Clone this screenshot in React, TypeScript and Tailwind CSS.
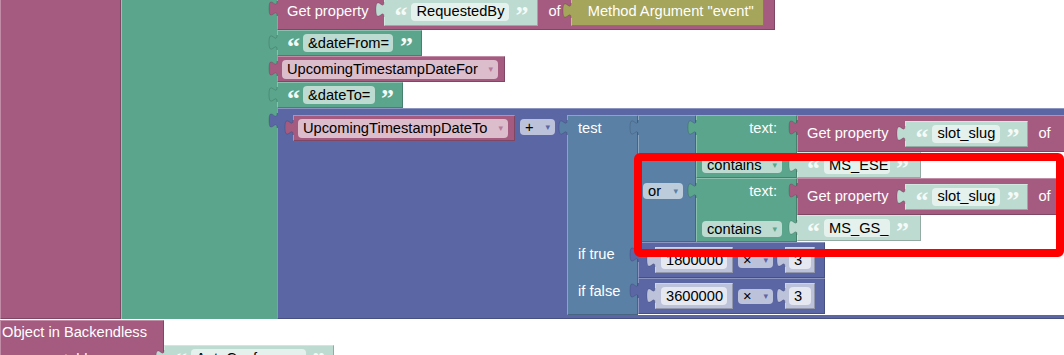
import type { ReactNode } from "react";

type Tone = "mag" | "grn" | "math" | "logic" | "olive" | "shText" | "shMath";

const TONE: Record<Tone, { bg: string; hex: string }> = {
  mag: { bg: "bg-[#a55b80]", hex: "#a55b80" },
  grn: { bg: "bg-[#5ba58c]", hex: "#5ba58c" },
  math: { bg: "bg-[#5b67a5]", hex: "#5b67a5" },
  logic: { bg: "bg-[#5b80a5]", hex: "#5b80a5" },
  olive: { bg: "bg-[#a5a55b]", hex: "#a5a55b" },
  shText: { bg: "bg-[#bddbd1]", hex: "#bddbd1" },
  shMath: { bg: "bg-[#bdc2db]", hex: "#bdc2db" },
};

const BEVEL = "shadow-[inset_1px_1px_0_rgba(255,255,255,0.3),inset_-1px_-1px_0_rgba(0,0,0,0.22)]";

// puzzle tab sticking out of the left edge of a value block
function Tab({ hex, low }: { hex: string; low?: boolean }) {
  return (
    <svg className={`absolute left-[-8px] overflow-visible ${low ? "top-[8px]" : "top-[5px]"}`} width={9} height={15}>
      <path d="M9,0 L8,0 C8,10 0,-8 0,7.5 S8,5 8,15 L9,15 Z" fill={hex} />
      <path d="M8,0 C8,10 0,-8 0,7.5 S8,5 8,15" fill="none" stroke="rgba(0,0,0,0.18)" strokeWidth={0.8} />
    </svg>
  );
}

function Blk({
  tone,
  className = "",
  tab = true,
  low,
  children,
}: {
  tone: Tone;
  className?: string;
  tab?: boolean;
  low?: boolean;
  children?: ReactNode;
}) {
  const t = TONE[tone];
  return (
    <div className={`relative shrink-0 ${t.bg} ${BEVEL} ${className}`}>
      {tab ? <Tab hex={t.hex} low={low} /> : null}
      {children}
    </div>
  );
}

function Field({ text, className, arrow }: { text: string; className: string; arrow?: string }) {
  return (
    <div className={`flex shrink-0 items-center justify-between rounded-[4px] px-[5px] whitespace-nowrap text-black ${className}`}>
      <span>{text}</span>
      {arrow ? <span className={`font-['DejaVu_Sans',sans-serif] text-[9px] ${arrow}`}>▾</span> : null}
    </div>
  );
}

function Quote({ close, className = "" }: { close?: boolean; className?: string }) {
  return (
    <span className={`relative top-[4px] shrink-0 font-['Liberation_Serif',serif] text-[26px] font-bold text-[#f4faf7] ${className}`}>
      {close ? "\u201D" : "\u201C"}
    </span>
  );
}

// text shadow block: quotes around an editable field
function Str({ text, className, field }: { text: string; className: string; field: string }) {
  return (
    <Blk tone="shText" className={`flex items-center pl-[10px] ${className}`}>
      <Quote className="w-[17px]" />
      <Field text={text} className={`h-[18px] bg-[#e5f1ed] ${field}`} />
      <Quote close className="ml-[6px]" />
    </Blk>
  );
}

function GetProp() {
  return (
    <Blk tone="mag" className="flex h-[37px] w-[300px] items-center pl-[10px]">
      <span className="shrink-0 text-white">Get property</span>
      <Str text="slot_slug" className="ml-[17px] h-[26px] w-[123px]" field="w-[68px]" />
      <span className="ml-[10px] shrink-0 text-white">of</span>
    </Blk>
  );
}

function TextContains({ h, str }: { h: string; str: string }) {
  return (
    <div className="flex shrink-0">
      <Blk tone="grn" className={`flex w-[101px] flex-col pl-[6px] pt-[3px] pb-[5px] ${h}`}>
        <div className="flex h-5 w-[75px] shrink-0 items-center justify-end text-white">text:</div>
        <Field text="contains" className="mt-auto h-[16px] w-[80px] bg-[#bddbd1]" arrow="text-[#5ba58c]" />
      </Blk>
      <div className="flex shrink-0 flex-col items-start">
        <GetProp />
        <Str text={str} className="h-[26px] w-[124px]" field="w-[66px]" />
      </div>
    </div>
  );
}

function Multiply({ num }: { num: string }) {
  return (
    <Blk tone="math" className="flex h-[36px] w-[187px] items-center pl-[17px]">
      <Blk tone="shMath" className="flex h-[26px] w-[78px] items-center pl-[6px]">
        <Field text={num} className="h-[18px] w-[66px] bg-[#e5e7f1]" />
      </Blk>
      <Field text="×" className="ml-[5px] h-[15px] w-[35px] bg-[#bdc2db]" arrow="text-[#5b67a5]" />
      <Blk tone="shMath" className="ml-[12px] flex h-[26px] w-[30px] items-center pl-[4px]">
        <Field text="3" className="h-[18px] w-[22px] bg-[#e5e7f1]" />
      </Blk>
    </Blk>
  );
}

export default function App() {
  return (
    <div className="relative h-[355px] w-[1064px] overflow-hidden bg-white font-['Liberation_Sans',Arial,sans-serif] text-[14.67px] leading-none">
      <div className="mt-[-7px] flex flex-col">
        <div className="flex shrink-0">
          <div className={`w-[121px] shrink-0 bg-[#a55b80] ${BEVEL}`} />
          <div className="w-[156px] shrink-0 border-l border-[#8ec5b2] bg-[#5ba58c]" />

          <div className="flex shrink-0 flex-col items-start">
            {/* Get property "RequestedBy" of Method Argument "event" */}
            <Blk tone="mag" low className="flex h-[37px] w-[498px] items-center pl-[10px]">
              <span className="shrink-0 text-white">Get property</span>
              <Str text="RequestedBy" className="ml-[16px] h-[29px] w-[154px]" field="w-[98px]" />
              <span className="ml-[10px] shrink-0 text-white">of</span>
              <Blk tone="olive" className="ml-[10px] flex h-[28px] w-[193px] items-center pl-[17px]">
                <span className="whitespace-nowrap text-white">Method Argument "event"</span>
              </Blk>
            </Blk>

            <Blk tone="grn" className="flex h-[26px] w-[145px] items-center pl-[10px]">
              <Quote className="w-[16px]" />
              <Field text="&dateFrom=" className="h-[18px] w-[90px] bg-[#bddbd1]" />
              <Quote close className="ml-[7px]" />
            </Blk>

            <Blk tone="mag" className="flex h-[26px] w-[228px] items-center pl-[5px]">
              <Field text="UpcomingTimestampDateFor" className="h-[19px] w-[216px] bg-[#dbbdcc]" arrow="text-[#b77a98]" />
            </Blk>

            <Blk tone="grn" className="flex h-[26px] w-[126px] items-center pl-[10px]">
              <Quote className="w-[16px]" />
              <Field text="&dateTo=" className="h-[18px] w-[72px] bg-[#bddbd1]" />
              <Quote close className="ml-[6px]" />
            </Blk>

            {/* arithmetic: A + (test ? a : b) */}
            <Blk tone="math" className="flex h-[211px] w-[800px] items-start pl-[16px] pt-[7px]">
              <Blk tone="mag" className="flex h-[26px] w-[222px] items-center pl-[5px]">
                <Field text="UpcomingTimestampDateTo" className="h-[19px] w-[210px] bg-[#dbbdcc]" arrow="text-[#b77a98]" />
              </Blk>
              <Field text="+" className="ml-[5px] mt-[4px] h-[16px] w-[35px] bg-[#bdc2db]" arrow="text-[#5b67a5]" />

              <div className="ml-[12px] flex h-[200px] w-[500px] shrink-0 items-start bg-white">
                <Blk tone="logic" className="flex h-[200px] w-[71px] flex-col pl-[11px] pt-[3px] text-white">
                  <div className="flex h-5 shrink-0 items-center">test</div>
                  <div className="mt-[106px] flex h-5 shrink-0 items-center whitespace-nowrap">if true</div>
                  <div className="mt-[17px] flex h-5 shrink-0 items-center whitespace-nowrap">if false</div>
                </Blk>

                <div className="flex shrink-0 flex-col items-start">
                  <div className="flex shrink-0">
                    <Blk tone="logic" className="h-[127px] w-[58px] pl-[5px] pt-[68px]">
                      <Field text="or" className="h-[16px] w-[40px] bg-[#bdccdb]" arrow="text-[#5b80a5]" />
                    </Blk>
                    <div className="flex shrink-0 flex-col">
                      <TextContains h="h-[63px]" str="MS_ESE" />
                      <TextContains h="h-[64px]" str="MS_GS_" />
                    </div>
                  </div>
                  <Multiply num="1800000" />
                  <Multiply num="3600000" />
                </div>
              </div>
            </Blk>
          </div>
        </div>

        <div className="mt-px flex shrink-0 items-start">
          <Blk tone="mag" tab={false} className="flex h-[40px] w-[164px] flex-col pl-[2px] pt-[2px] text-white">
            <div className="flex h-5 shrink-0 items-center whitespace-nowrap">Object in Backendless</div>
            <div className="mt-[7px] flex h-5 shrink-0 items-center pl-[62px]">table</div>
          </Blk>
          <Str text="AutoConference" className="mt-[25px] h-[26px] w-[170px]" field="w-[115px]" />
        </div>
      </div>

      {/* highlight frame drawn over the blocks */}
      <div className="absolute left-[634px] top-[153px] h-[104px] w-[430px] rounded-[6px] border-[8px] border-[#ff0000]" />
    </div>
  );
}
